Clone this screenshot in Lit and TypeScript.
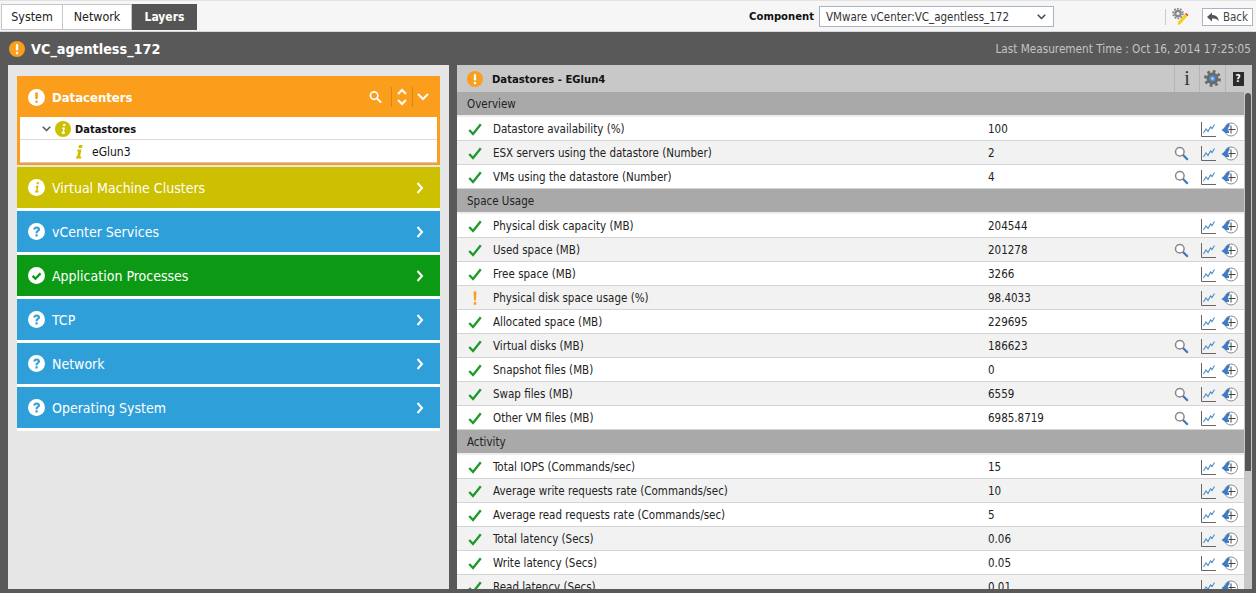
import { LitElement, html, css, svg } from "lit";
import { customElement } from "lit/decorators.js";

type Row = { name: string; value: string; warn?: boolean; drill?: boolean };
type Section = { title: string; rows: Row[] };

const sections: Section[] = [
  {
    title: "Overview",
    rows: [
      { name: "Datastore availability (%)", value: "100" },
      { name: "ESX servers using the datastore (Number)", value: "2", drill: true },
      { name: "VMs using the datastore (Number)", value: "4", drill: true },
    ],
  },
  {
    title: "Space Usage",
    rows: [
      { name: "Physical disk capacity (MB)", value: "204544" },
      { name: "Used space (MB)", value: "201278", drill: true },
      { name: "Free space (MB)", value: "3266" },
      { name: "Physical disk space usage (%)", value: "98.4033", warn: true },
      { name: "Allocated space (MB)", value: "229695" },
      { name: "Virtual disks (MB)", value: "186623", drill: true },
      { name: "Snapshot files (MB)", value: "0" },
      { name: "Swap files (MB)", value: "6559", drill: true },
      { name: "Other VM files (MB)", value: "6985.8719", drill: true },
    ],
  },
  {
    title: "Activity",
    rows: [
      { name: "Total IOPS (Commands/sec)", value: "15" },
      { name: "Average write requests rate (Commands/sec)", value: "10" },
      { name: "Average read requests rate (Commands/sec)", value: "5" },
      { name: "Total latency (Secs)", value: "0.06" },
      { name: "Write latency (Secs)", value: "0.05" },
      { name: "Read latency (Secs)", value: "0.01" },
    ],
  },
];

const layers = [
  { name: "Virtual Machine Clusters", color: "#cdc000", kind: "info" },
  { name: "vCenter Services", color: "#2f9fd9", kind: "help" },
  { name: "Application Processes", color: "#0c9a14", kind: "ok" },
  { name: "TCP", color: "#2f9fd9", kind: "help" },
  { name: "Network", color: "#2f9fd9", kind: "help" },
  { name: "Operating System", color: "#2f9fd9", kind: "help" },
];

// round status badge, the glyph is cut out in the colour of the bar behind it
function badge(kind: string, fill: string, mark: string, size = 16) {
  let glyph = svg`<rect x="6.800" y="3" width="2.400" height="6.600" rx="1" fill=${mark}/><rect x="6.800" y="10.800" width="2.400" height="2.400" rx="1" fill=${mark}/>`;
  if (kind === "info") {
    glyph = svg`<path d="M8.300 3h2.300l-.4 2H7.900zM7.400 6.400H10l-1 4.700h1l-.3 1.600H6.600l.3-1.600h.6l.7-3.100H7.100z" fill=${mark}/>`;
  } else if (kind === "help") {
    glyph = svg`<path d="M4.900 6.200C5.100 4.300 6.500 3.200 8.200 3.200c1.800 0 3.100 1.100 3.100 2.700 0 1.300-.8 1.900-1.500 2.400-.5.400-.7.600-.7 1.300H7c0-1.300.4-1.900 1.100-2.400.6-.4 1-.7 1-1.200 0-.5-.4-.9-1-.9-.6 0-1 .4-1.100 1zM7 10.500h2.100v2.200H7z" fill=${mark}/>`;
  } else if (kind === "ok") {
    glyph = svg`<path d="M4.300 8.300l2.700 2.700 4.800-5" fill="none" stroke=${mark} stroke-width="2.200"/>`;
  }
  return html`<svg class="badge" width=${size} height=${size} viewBox="0 0 16 16"><circle cx="8" cy="8" r="8" fill=${fill}/>${glyph}</svg>`;
}

const chevronRight = html`<svg width="8" height="12" viewBox="0 0 8 12"><path d="M1.500 1l4.500 5-4.500 5" fill="none" stroke="#fff" stroke-width="2"/></svg>`;
const chevronDown = (color: string, w = 12, h = 8) => html`<svg width=${w} height=${h} viewBox="0 0 12 8"><path d="M1 1l5 5 5-5" fill="none" stroke=${color} stroke-width="2"/></svg>`;
const tick = html`<svg width="14" height="13" viewBox="0 0 14 13"><path d="M1.200 7l3.800 4L12.800 1.200" fill="none" stroke="#1d9a2b" stroke-width="2.300"/></svg>`;
const bang = html`<svg width="14" height="14" viewBox="0 0 14 14"><path d="M5.500 .5h3l-.5 9H6zM5.800 11h2.400v2.700H5.800z" fill="#f9a11b"/></svg>`;
const lens = html`<svg width="15" height="15" viewBox="0 0 15 15"><circle cx="5.800" cy="5.800" r="4.300" fill="#fff" stroke="#8a8a8a" stroke-width="1.500"/><path d="M9 9l4.800 4.800" stroke="#3b78b5" stroke-width="2.200"/></svg>`;
const graph = html`<svg width="15" height="15" viewBox="0 0 15 15"><path d="M.5 0v14.500H15" fill="none" stroke="#666"/><path d="M2.500 11l2.500-4 2 2.500 2.500-4.500 1.500 1.500 2.500-4" fill="none" stroke="#4a8ccb" stroke-width="1.100"/></svg>`;
const history = html`<svg width="17" height="15" viewBox="0 0 17 15"><circle cx="10" cy="7.500" r="6.500" fill="#fff" stroke="#8c8c8c"/><path d="M8.500 1.300C6 1.600 5.200 3 4.700 4.800L.5 8l4 3h3.500V8.500H6.800c0-2.200.7-3.500 1.700-4.200z" fill="#3d7cc4"/><path d="M10 3.500v8M7.500 7.500h7" fill="none" stroke="#444"/></svg>`;

@customElement("app-root")
export class AppRoot extends LitElement {
  static styles = css`
    :host {
      display: flex;
      flex-direction: column;
      height: 593px;
      overflow: hidden;
      background: #595959;
      font-family: "DejaVu Sans Condensed", "DejaVu Sans", sans-serif;
      font-size: 11.500px;
      color: #222;
    }
    svg { display: block; flex: none; }
    .topbar {
      height: 29px;
      flex: none;
      display: flex;
      align-items: center;
      padding-top: 1px;
      padding-left: 1px;
      background: #f6f6f6;
      border-top: 1px solid #e2e2e2;
      border-bottom: 1px solid #d8d8d8;
    }
    .tabs { display: flex; height: 26px; font-size: 12.400px; }
    .tab {
      display: flex;
      align-items: center;
      justify-content: center;
      box-sizing: border-box;
      border: 1px solid #c6c6c6;
      border-left: none;
      background: #fff;
    }
    .tab:first-child { border-left: 1px solid #c6c6c6; }
    .tab.system { width: 62px; }
    .tab.network { width: 69px; }
    .tab.layers {
      width: 65px;
      border: none;
      background: #555;
      color: #fff;
      font-weight: bold;
      font-size: 12px;
    }
    .component {
      margin-left: auto;
      display: flex;
      align-items: center;
      gap: 5px;
      font-weight: bold;
      color: #111;
      font-size: 11.200px;
    }
    .select {
      width: 235px;
      height: 21px;
      box-sizing: border-box;
      padding: 0 7px 0 6px;
      display: flex;
      align-items: center;
      justify-content: space-between;
      border: 1px solid #a9b4c4;
      background: #fff;
      font-weight: normal;
      font-size: 11.500px;
      color: #333;
    }
    .tools {
      margin-left: 111px;
      margin-right: 3px;
      display: flex;
      align-items: center;
    }
    .sep { width: 1px; height: 16px; background: #ccc; margin-right: 6px; }
    .back {
      margin-left: 13px;
      width: 51px;
      height: 18px;
      box-sizing: border-box;
      display: flex;
      align-items: center;
      justify-content: center;
      gap: 4px;
      border: 1px solid #a9b4c4;
      background: #fff;
      color: #444;
    }
    .title {
      height: 33px;
      flex: none;
      display: flex;
      align-items: center;
      padding: 0 5px 0 9px;
      color: #fff;
    }
    .title h1 {
      margin: 0 0 0 6px;
      font-size: 14.300px;
      font-weight: bold;
    }
    .measured { margin-left: auto; color: #c4c4c4; font-size: 11.700px; }
    .main {
      flex: 1;
      min-height: 0;
      display: flex;
      gap: 8px;
      padding: 0 4px 4px 8px;
    }
    .left {
      width: 441px;
      flex: none;
      box-sizing: border-box;
      padding: 11px 9px;
      background: #e6e6e6;
    }
    .open {
      background: #fb9e1c;
      padding: 0 3px 2px;
      margin-bottom: 2px;
    }
    .bar {
      height: 41px;
      box-sizing: border-box;
      display: flex;
      align-items: center;
      padding: 0 16px 0 11px;
      color: #fff;
      font-size: 14px;
    }
    .bar .name { margin-left: 7px; }
    .bar .end { margin-left: auto; }
    .layer { border-bottom: 3px solid #fff; height: 44px; box-sizing: border-box; }
    .open .bar { margin: 0 -3px; padding-right: 11px; padding-top: 1px; font-weight: bold; font-size: 13px; }
    .actions { margin-left: auto; display: flex; align-items: center; height: 20px; }
    .actions .rule { width: 1px; height: 20px; background: #d8861a; }
    .actions .find { margin-right: 9px; }
    .actions .updown { margin: 0 5px 0 5px; }
    .actions .fold { margin-left: 4px; }
    .tree { background: #fff; }
    .node {
      height: 20px;
      padding-top: 2px;
      display: flex;
      align-items: center;
      border-bottom: 1px solid #dcdcdc;
      font-weight: bold;
      font-size: 11px;
      color: #111;
    }
    .node.root { padding-left: 22px; gap: 4px; }
    .node.leaf {
      padding-left: 55px;
      gap: 8px;
      font-weight: normal;
      font-size: 12px;
      border-bottom: 1px solid #ccc;
    }
    .right {
      flex: 1;
      min-width: 0;
      display: flex;
      flex-direction: column;
      background: #fff;
      overflow: hidden;
    }
    .rhead {
      height: 27px;
      flex: none;
      display: flex;
      align-items: center;
      padding-left: 10px;
      background: #c8c8c8;
      font-weight: bold;
      font-size: 11.200px;
      color: #111;
    }
    .rhead .caption { margin-left: 9px; padding-top: 1px; }
    .rhead .btn {
      height: 27px;
      box-sizing: border-box;
      display: flex;
      align-items: center;
      justify-content: center;
      border-left: 1px solid #b4b4b4;
    }
    .rhead .info { margin-left: auto; width: 25px; }
    .rhead .gear { width: 26px; }
    .rhead .help { width: 25px; margin-right: 2px; }
    .rhead .i { font-family: "Liberation Serif", serif; font-size: 20px; font-weight: normal; color: #333; }
    .rhead .q {
      width: 11px;
      height: 14px;
      background: #2b2b2b;
      color: #fff;
      font-size: 10px;
      display: flex;
      align-items: center;
      justify-content: center;
    }
    .rbody { flex: 1; min-height: 0; display: flex; overflow: hidden; }
    .table { flex: 1; min-width: 0; }
    .scroll {
      width: 8px;
      flex: none;
      background: #c8c8c8;
      position: relative;
    }
    .thumb {
      position: absolute;
      left: 1px;
      top: 1px;
      width: 6px;
      height: 378px;
      border-radius: 3px 3px 0 0;
      background: #555;
    }
    .section {
      height: 25px;
      box-sizing: border-box;
      display: flex;
      align-items: center;
      padding: 1px 0 0 10px;
      background: #a9a9a9;
      border-bottom: 2px solid #eee;
      color: #222;
    }
    .row {
      height: 24px;
      box-sizing: border-box;
      display: grid;
      grid-template-columns: 36px 495px 1fr 21px 21px;
      padding: 1px 4px 0 0;
      align-items: center;
      background: #fff;
      border-bottom: 1px solid #d4d4d4;
    }
    .row.even { background: #f2f2f2; }
    .row .status { display: flex; justify-content: center; }
    .row .metric { white-space: nowrap; }
    .row .val { display: flex; justify-content: space-between; align-items: center; }
    .row .drill { margin-right: 9px; }
    .cell { display: flex; justify-content: center; }
  `;

  renderRow(r: Row, i: number) {
    return html`<div class="row ${i % 2 ? "even" : ""}">
      <div class="status">${r.warn ? bang : tick}</div>
      <div class="metric">${r.name}</div>
      <div class="val">
        <span>${r.value}</span>
        ${r.drill ? html`<span class="drill">${lens}</span>` : ""}
      </div>
      <div class="cell">${graph}</div>
      <div class="cell">${history}</div>
    </div>`;
  }

  render() {
    return html`
      <div class="topbar">
        <div class="tabs">
          <div class="tab system">System</div>
          <div class="tab network">Network</div>
          <div class="tab layers">Layers</div>
        </div>
        <div class="component">
          <span>Component</span>
          <div class="select"><span>VMware vCenter:VC_agentless_172</span>${chevronDown("#444", 9, 6)}</div>
        </div>
        <div class="tools">
          <div class="sep"></div>
          <svg width="17" height="17" viewBox="0 0 17 17">
            <circle cx="6" cy="5.500" r="4.800" fill="none" stroke="#888" stroke-width="2" stroke-dasharray="1.800 1.200"/>
            <circle cx="6" cy="5.500" r="3.800" fill="#888"/><circle cx="6" cy="5.500" r="1.600" fill="#eee"/>
            <path d="M6 14l7-8 2.500 2-7 8-3 1z" fill="#f5d020"/><path d="M13 6l1-1 2.500 2-1 1z" fill="#d9342b"/>
          </svg>
          <div class="back">
            <svg width="12" height="10" viewBox="0 0 12 10"><path d="M0 5l5-4.500v2.500c4 0 6 2 7 6-2-2-4-2.500-7-2.500v3z" fill="#555"/></svg>
            Back
          </div>
        </div>
      </div>
      <div class="title">
        ${badge("warn", "#fb9e1c", "#fff")}
        <h1>VC_agentless_172</h1>
        <span class="measured">Last Measurement Time : Oct 16, 2014 17:25:05</span>
      </div>
      <div class="main">
        <div class="left">
          <div class="open">
            <div class="bar">
              ${badge("warn", "#fff", "#fb9e1c", 17)}
              <span class="name">Datacenters</span>
              <div class="actions">
                <svg class="find" width="13" height="14" viewBox="0 0 14 14"><circle cx="5.500" cy="5.500" r="4" fill="none" stroke="#fff" stroke-width="1.800"/><path d="M8.500 8.500l4.500 4.500" stroke="#fff" stroke-width="2.200"/></svg>
                <div class="rule"></div>
                <svg class="updown" width="10" height="20" viewBox="0 0 10 20"><path d="M1 7l4-4 4 4M1 13l4 4 4-4" fill="none" stroke="#fff" stroke-width="2"/></svg>
                <div class="rule"></div>
                <span class="fold">${chevronDown("#fff")}</span>
              </div>
            </div>
            <div class="tree">
              <div class="node root">
                ${chevronDown("#555", 9, 6)}
                ${badge("info", "#cdc000", "#fff")}
                <span>Datastores</span>
              </div>
              <div class="node leaf">
                <svg width="9" height="14" viewBox="0 0 9 14"><path d="M4 0h3.500l-.6 3H3.400zM2.500 4.500h4l-1.500 7h1.500l-.4 2H.8l.4-2h1l1.100-5H2z" fill="#cdc000"/></svg>
                <span>eGlun3</span>
              </div>
            </div>
          </div>
          ${layers.map(
            (l) => html`<div class="layer">
              <div class="bar" style="background:${l.color}">
                ${badge(l.kind, "#fff", l.color, 17)}
                <span class="name">${l.name}</span>
                <span class="end">${chevronRight}</span>
              </div>
            </div>`
          )}
        </div>
        <div class="right">
          <div class="rhead">
            ${badge("warn", "#fb9e1c", "#fff")}
            <span class="caption">Datastores - EGlun4</span>
            <div class="btn info"><span class="i">i</span></div>
            <div class="btn gear">
              <svg width="17" height="17" viewBox="0 0 17 17"><circle cx="8.500" cy="8.500" r="7" fill="none" stroke="#6a6a6a" stroke-width="3" stroke-dasharray="2.700 2.800"/><circle cx="8.500" cy="8.500" r="6" fill="#6a6a6a"/><circle cx="8.500" cy="8.500" r="3" fill="#4a8fe0"/><circle cx="8.500" cy="8.500" r="1.200" fill="#bcd6f5"/></svg>
            </div>
            <div class="btn help"><span class="q">?</span></div>
          </div>
          <div class="rbody">
            <div class="table">
              ${sections.map(
                (s) => html`<div class="section">${s.title}</div>${s.rows.map((r, i) => this.renderRow(r, i))}`
              )}
            </div>
            <div class="scroll"><div class="thumb"></div></div>
          </div>
        </div>
      </div>
    `;
  }
}
